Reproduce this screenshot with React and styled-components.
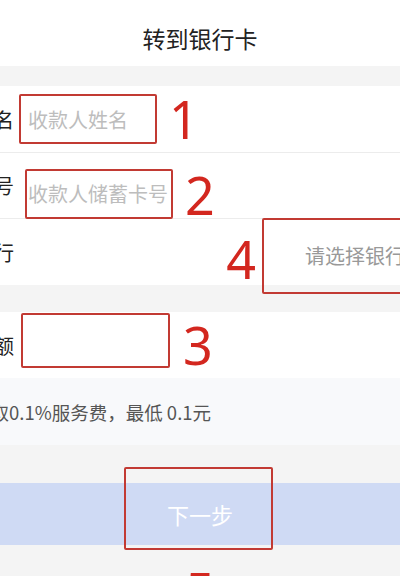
import React from 'react';
import styled, { createGlobalStyle } from 'styled-components';

const GlobalStyle = createGlobalStyle`
  html, body {
    margin: 0;
    padding: 0;
    background: #f4f4f4;
    overflow: hidden;
    font-family: "Noto Sans CJK SC", "Noto Sans", sans-serif;
  }
`;

const Page = styled.div`
  width: 400px;
  height: 576px;
  overflow: hidden;
  background: #f4f4f4;
`;

const Header = styled.div`
  height: 66px;
  box-sizing: border-box;
  padding-top: 9px;
  display: flex;
  align-items: center;
  justify-content: center;
  background: #fff;
  color: #222;
  font-size: 23px;
`;

const Gap = styled.div`
  height: ${(p) => p.h}px;
`;

const Group = styled.div`
  background: #fff;
`;

const Row = styled.div`
  height: ${(p) => p.h || 66}px;
  display: flex;
  align-items: center;
  border-top: ${(p) => (p.divider ? '1px solid #ececec' : 'none')};
  box-sizing: border-box;
`;

const Label = styled.span`
  flex-shrink: 0;
  width: 40px;
  margin-left: -26px;
  font-size: 20px;
  color: #222;
`;

const Mark = styled.div`
  position: relative;
  z-index: 1;
  flex-shrink: 0;
  box-sizing: border-box;
  width: ${(p) => p.w}px;
  height: ${(p) => p.h}px;
  margin-left: ${(p) => p.ml || 0}px;
  margin-right: ${(p) => p.mr || 0}px;
  margin-top: ${(p) => p.mt || 0}px;
  padding-left: ${(p) => p.pl || 0}px;
  display: flex;
  align-items: center;
  border: 2px solid #c23a33;
  border-radius: 2px;
  font-size: 20px;
  color: ${(p) => (p.select ? '#999' : '#bdbdbd')};
  white-space: nowrap;
  overflow: hidden;
`;

const Num = styled.span`
  position: relative;
  z-index: 1;
  flex-shrink: 0;
  margin-left: ${(p) => p.ml || 0}px;
  margin-top: ${(p) => p.mt || 0}px;
  font-family: "Noto Sans", sans-serif;
  font-size: 52px;
  line-height: 1;
  color: #d3271f;
`;

const Spacer = styled.div`
  flex: 1;
`;

const Note = styled.div`
  height: 67px;
  display: flex;
  align-items: center;
  background: #f8f9fb;
  font-size: 18.5px;
  color: #555;
  white-space: nowrap;

  span {
    margin-left: -28px;
  }
`;

const Button = styled.div`
  position: relative;
  height: 62px;
  display: flex;
  align-items: center;
  justify-content: center;
  background: #cfdaf4;
  color: #fff;
  font-size: 22px;
`;

const ButtonMark = styled.div`
  position: absolute;
  left: 124px;
  top: -16px;
  width: 149px;
  height: 83px;
  box-sizing: border-box;
  border: 2px solid #c23a33;
  border-radius: 2px;
`;

const Footer = styled.div`
  display: flex;
  justify-content: center;
  padding-top: 20px;
`;

const App = () => (
  <Page>
    <GlobalStyle />
    <Header>转到银行卡</Header>
    <Gap h={20} />
    <Group>
      <Row>
        <Label>姓名</Label>
        <Mark w={138} h={50} ml={5} pl={7}>收款人姓名</Mark>
        <Num ml={12}>1</Num>
      </Row>
      <Row divider>
        <Label>卡号</Label>
        <Mark w={148} h={50} ml={11} mt={16} pl={1}>收款人储蓄卡号</Mark>
        <Num ml={12} mt={18}>2</Num>
      </Row>
      <Row divider h={67}>
        <Label>银行</Label>
        <Spacer />
        <Num mt={14}>4</Num>
        <Mark w={150} h={76} ml={6} mr={-12} mt={7} pl={41} select>
          请选择银行
        </Mark>
      </Row>
    </Group>
    <Gap h={27} />
    <Group>
      <Row>
        <Label>金额</Label>
        <Mark w={149} h={55} ml={7} mt={-10} />
        <Num ml={13}>3</Num>
      </Row>
    </Group>
    <Note>
      <span>收取0.1%服务费，最低 0.1元</span>
    </Note>
    <Gap h={38} />
    <Button>
      下一步
      <ButtonMark />
    </Button>
    <Footer>
      <Num>5</Num>
    </Footer>
  </Page>
);

export default App;
